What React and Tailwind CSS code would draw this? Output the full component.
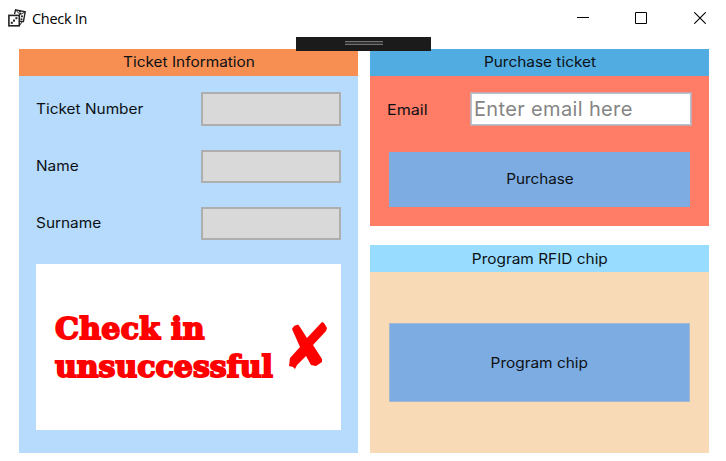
import React from "react";

const label = "font-['Inter','Liberation_Sans',sans-serif] text-[14px] leading-5 text-[#0c1014] whitespace-nowrap";

function DiceIcon() {
  return (
    <svg width="19" height="19" viewBox="0 0 19 19" fill="none" stroke="#222" className="shrink-0">
      <path d="M6.5 6 L7.6 1.7 L17.2 3.7 L15.4 13.6 L12 13.4" strokeWidth="1.4" />
      <path d="M8 2.2 L10.6 5.2 L12.6 6.4 L17 4" strokeWidth="1" />
      <rect x="0.9" y="7.4" width="10.4" height="10.4" strokeWidth="1.6" fill="#fff" />
      <path d="M11.2 7.2 L13 4.8 M11.4 17.6 L14.2 13.8" strokeWidth="1" />
      <g fill="#222" stroke="none">
        <rect x="2.8" y="13.8" width="2" height="2" />
        <rect x="5" y="11.6" width="2" height="2" />
        <rect x="7.4" y="9.2" width="2" height="2" />
        <rect x="13" y="7.4" width="1.8" height="1.8" />
        <rect x="12.6" y="10.4" width="1.8" height="1.8" />
        <rect x="11" y="3" width="2" height="1.4" />
      </g>
    </svg>
  );
}

function TitleBar() {
  return (
    <header className="flex h-[37px] shrink-0 items-start pl-2 pr-5 pt-2">
      <DiceIcon />
      <h1 className="ml-[5px] font-['Open_Sans','Noto_Sans',sans-serif] text-[14.5px] leading-[21px] tracking-[-0.3px] text-black">Check In</h1>
      <div className="ml-auto mt-1 flex">
        <svg width="12" height="12" stroke="#000" fill="none" className="mr-[46px]"><path d="M0 5.5H12" /></svg>
        <svg width="12" height="12" stroke="#000" fill="none" className="mr-[47px]"><path d="M.5 .5h11v11h-11z" /></svg>
        <svg width="12" height="12" stroke="#000" fill="none"><path d="M.3 .3L11.7 11.7M11.7 .3L.3 11.7" strokeWidth="1.1" /></svg>
      </div>
    </header>
  );
}

function Field({ name }) {
  return (
    <div className="flex h-[33.3px] items-center justify-between">
      <span className={`-mt-[0.6px] origin-left scale-x-110 ${label}`}>{name}</span>
      <div className="h-[33.3px] w-[140px] border-2 border-[#aeaeae] bg-[#d9d9d9]" />
    </div>
  );
}

function PanelHeader({ className, children }) {
  return (
    <h2 className={`flex shrink-0 items-center justify-center ${label} ${className}`}>
      <span className="inline-block scale-x-110">{children}</span>
    </h2>
  );
}

export default function App() {
  return (
    <div className="relative flex h-[461px] w-[726px] flex-col overflow-hidden bg-white">
      <TitleBar />
      <main className="flex gap-3 pl-[19px] pt-3">
        <section className="flex h-[404px] w-[339px] flex-col bg-[#b6dbfd]">
          <PanelHeader className="h-[26.5px] bg-[#f78f53]">Ticket Information</PanelHeader>
          <div className="flex flex-col gap-6 px-[17px] pt-[16.8px]">
            <Field name="Ticket Number" />
            <Field name="Name" />
            <Field name="Surname" />
          </div>
          <div className="ml-[17px] mt-[23.8px] flex h-[166px] w-[305px] items-center bg-white pl-[19px]">
            <p className="w-[234px] whitespace-nowrap pt-[2px] font-['DejaVu_Serif','Liberation_Serif',serif] text-[30px] font-bold leading-[38px] text-[#ff0000] [-webkit-text-stroke:1.9px_#ff0000]">
              <span className="tracking-[0.3px]">Check in</span><br />unsuccessful
            </p>
            <svg width="39" height="49" viewBox="0 0 39 49" fill="#ff0000" className="shrink-0">
              <path d="M3 7L5 4L9 2.5L11 5L18 16L33 0L35 1L38 6L37 9L24 23L33 37V40L27 44L22 43L17 34L8 43L6 47L4 45L0 44L1 36L11 25Z" />
            </svg>
          </div>
        </section>
        <div className="flex w-[339px] flex-col gap-[19px]">
          <section className="flex h-[177px] flex-col bg-[#ff7c66]">
            <PanelHeader className="h-[26.5px] bg-[#50ace1]">Purchase ticket</PanelHeader>
            <div className="flex items-center justify-between px-[17px] pt-[16px]">
              <label htmlFor="email" className={`mt-[2px] origin-left scale-x-[1.15] ${label}`}>Email</label>
              <div className="flex h-[34px] w-[222px] border border-[#c9a8ab] bg-white">
                <input id="email" placeholder="Enter email here" className="h-8 w-full border border-[#b4c3cf] px-[2px] font-['Inter','Liberation_Sans',sans-serif] text-[20px] tracking-[0.35px] placeholder:text-[#858585]" />
              </div>
            </div>
            <button className={`ml-[19px] mt-[26px] h-[55px] w-[301px] bg-[#7dace2] ${label}`}>
              <span className="inline-block scale-x-[1.09]">Purchase</span>
            </button>
          </section>
          <section className="flex h-[208px] flex-col bg-[#f8dab7]">
            <PanelHeader className="h-[27px] bg-[#98ddff]">Program RFID chip</PanelHeader>
            <button className={`ml-[19px] mt-[51px] h-[79px] w-[301px] border border-[#a5b9d0] bg-[#7dace2] ${label}`}>
              <span className="inline-block scale-x-110">Program chip</span>
            </button>
          </section>
        </div>
      </main>
      <div className="absolute left-[296px] top-[37px] flex h-[14px] w-[135px] justify-center bg-[#1b1b1b] pt-1">
        <div className="h-1 w-[38px] border-y border-[#727272] bg-[#333]" />
      </div>
    </div>
  );
}
